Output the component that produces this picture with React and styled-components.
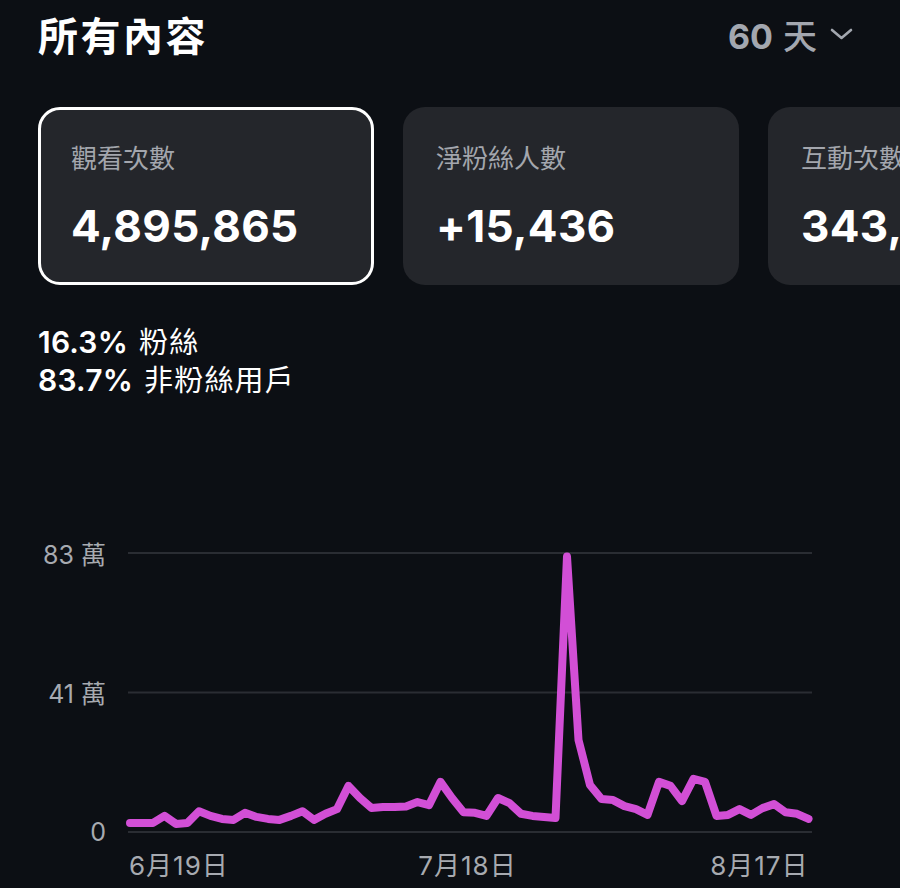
import React from "react";
import styled, { createGlobalStyle } from "styled-components";

const GlobalStyle = createGlobalStyle`
  html, body {
    margin: 0;
    padding: 0;
    background: #0c0f14;
  }
  body {
    font-family: Inter, "Noto Sans CJK TC", sans-serif;
    color: #ffffff;
  }
`;

const Page = styled.div`
  width: 900px;
  height: 888px;
  overflow: hidden;
  box-sizing: border-box;
  padding-left: 38px;
  background: #0c0f14;
`;

const Header = styled.header`
  display: flex;
  align-items: center;
  justify-content: space-between;
  height: 68px;
  padding-right: 47px;
`;

const Title = styled.h1`
  margin: 0;
  font-family: "Noto Sans CJK TC", sans-serif;
  font-size: 40px;
  font-weight: 700;
  letter-spacing: 2.5px;
  color: #ffffff;
`;

const RangeButton = styled.button`
  display: flex;
  align-items: center;
  gap: 13px;
  background: none;
  border: none;
  padding: 0;
  color: #a3a7af;
  font-family: Inter, "Noto Sans CJK TC", sans-serif;
  font-size: 34px;
  font-weight: 700;
  cursor: pointer;
`;

const RangeUnit = styled.span`
  font-family: "Noto Sans CJK TC", sans-serif;
  font-weight: 500;
  margin-left: 10px;
`;

const CardRow = styled.div`
  display: flex;
  gap: 29px;
  margin-top: 39px;
`;

const Card = styled.div`
  flex: 0 0 336px;
  height: 178px;
  box-sizing: border-box;
  border-radius: 22px;
  background: #24262b;
  border: 3.5px solid ${(p) => (p.$selected ? "#ffffff" : "transparent")};
  padding: 31px 0 0 30px;
  display: flex;
  flex-direction: column;
`;

const CardLabel = styled.div`
  font-family: "Noto Sans CJK TC", sans-serif;
  font-size: 26px;
  line-height: 31px;
  color: #a3a6ad;
  white-space: nowrap;
`;

const CardValue = styled.div`
  margin-top: 28px;
  font-family: Inter, sans-serif;
  font-size: 44px;
  font-weight: 700;
  line-height: 52px;
  letter-spacing: 0.3px;
  color: #ffffff;
  white-space: nowrap;
`;

const Split = styled.div`
  margin-top: 36px;
`;

const SplitLine = styled.div`
  height: 38px;
  display: flex;
  align-items: baseline;
  font-family: Inter, sans-serif;
  font-size: 30px;
  font-weight: 600;
  line-height: 38px;
  letter-spacing: 0.2px;
  color: #ffffff;
  white-space: nowrap;
`;

const SplitLabel = styled.span`
  font-family: "Noto Sans CJK TC", sans-serif;
  font-size: 29px;
  font-weight: 400;
  letter-spacing: 1.2px;
  margin-left: 11px;
`;

const ChartWrap = styled.div`
  margin-top: 133px;
`;

const ChartSvg = styled.svg`
  display: block;
  overflow: visible;
`;

const Chevron = () => (
  <svg width="23" height="12" viewBox="0 0 23 12" fill="none">
    <polyline
      points="2,2 11.5,10 21,2"
      stroke="#a3a7af"
      strokeWidth="2.6"
      strokeLinecap="round"
      strokeLinejoin="round"
    />
  </svg>
);

const values = [
  2.7, 2.7, 2.7, 4.8, 2.4, 2.7, 6.2, 4.8, 3.9, 3.6,
  5.7, 4.5, 3.9, 3.6, 4.8, 6.2, 3.6, 5.4, 6.8, 13.7,
  10.1, 7.1, 7.4, 7.4, 7.6, 8.9, 8.0, 14.9, 10.1, 5.9,
  5.7, 4.8, 10.1, 8.6, 5.4, 4.8, 4.5, 4.2, 82.0, 27.4,
  14.0, 9.8, 9.5, 7.7, 6.8, 5.1, 14.9, 13.7, 9.2, 15.8,
  14.9, 4.8, 5.1, 6.8, 5.1, 7.1, 8.3, 5.9, 5.4, 3.9,
];

const X0 = 130;
const X1 = 808.5;
const Y0 = 832;
const YMAX = 553;
const VMAX = 83;

const xAt = (i) => X0 + ((X1 - X0) * i) / (values.length - 1);
const yAt = (v) => Y0 - ((Y0 - YMAX) * v) / VMAX;

const gridLines = [
  { y: 553, label: "83 萬", ty: 564 },
  { y: 692.5, label: "41 萬", ty: 703 },
  { y: 832, label: "0", ty: 841 },
];

const xLabels = [
  { i: 0, text: "6月19日", anchor: "start", dx: -1 },
  { i: 29, text: "7月18日", anchor: "middle", dx: 4 },
  { i: 59, text: "8月17日", anchor: "end", dx: 0 },
];

const Chart = () => {
  const d = values
    .map((v, i) => `${i === 0 ? "M" : "L"}${xAt(i).toFixed(1)},${yAt(v).toFixed(1)}`)
    .join(" ");
  return (
    <ChartSvg width="862" height="358" viewBox="0 0 862 358">
      <g transform="translate(-38,-530)">
        {gridLines.map((g) => (
          <g key={g.label}>
            <line x1="128" x2="812" y1={g.y} y2={g.y} stroke="#2a2d33" strokeWidth="2" />
            <text
              x="106"
              y={g.ty}
              textAnchor="end"
              fontFamily="Inter, 'Noto Sans CJK TC', sans-serif"
              fontSize="25"
              fill="#a7aab0"
            >
              {g.label}
            </text>
          </g>
        ))}
        <path
          d={d}
          fill="none"
          stroke="#d24fd6"
          strokeWidth="8"
          strokeLinejoin="round"
          strokeLinecap="round"
        />
        {xLabels.map((l) => (
          <text
            key={l.text}
            x={xAt(l.i) + l.dx}
            y="875"
            textAnchor={l.anchor}
            fontFamily="Inter, 'Noto Sans CJK TC', sans-serif"
            fontSize="26"
            letterSpacing="1"
            fill="#a7aab0"
          >
            {l.text}
          </text>
        ))}
      </g>
    </ChartSvg>
  );
};

const cards = [
  { label: "觀看次數", value: "4,895,865", selected: true },
  { label: "淨粉絲人數", value: "+15,436" },
  { label: "互動次數", value: "343,218" },
];

export default function App() {
  return (
    <>
      <GlobalStyle />
      <Page>
        <Header>
          <Title>所有內容</Title>
          <RangeButton>
            <span>
              60<RangeUnit>天</RangeUnit>
            </span>
            <Chevron />
          </RangeButton>
        </Header>
        <CardRow>
          {cards.map((c) => (
            <Card key={c.label} $selected={c.selected}>
              <CardLabel>{c.label}</CardLabel>
              <CardValue>{c.value}</CardValue>
            </Card>
          ))}
        </CardRow>
        <Split>
          <SplitLine>
            16.3%<SplitLabel>粉絲</SplitLabel>
          </SplitLine>
          <SplitLine>
            83.7%<SplitLabel>非粉絲用戶</SplitLabel>
          </SplitLine>
        </Split>
        <ChartWrap>
          <Chart />
        </ChartWrap>
      </Page>
    </>
  );
}
